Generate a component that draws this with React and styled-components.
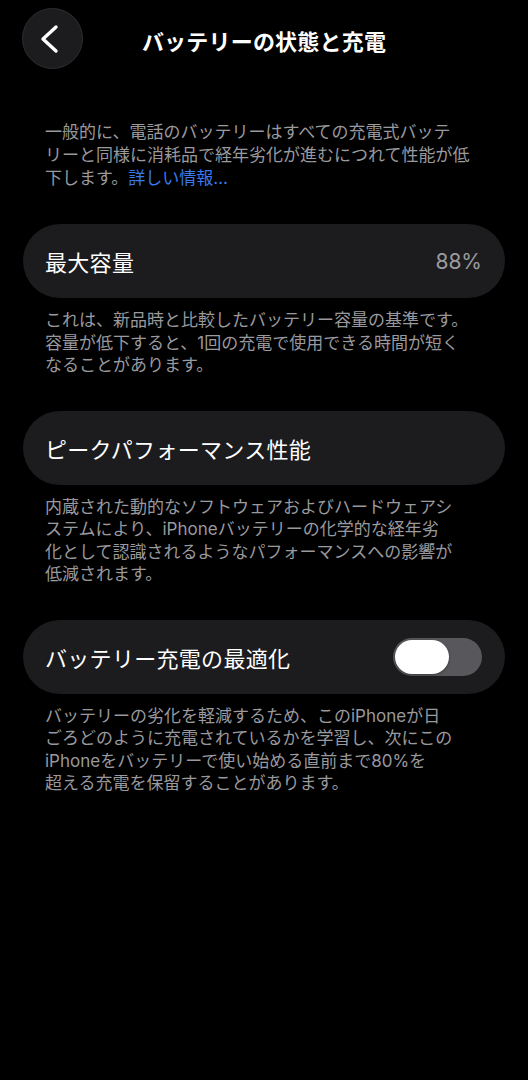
import styled, { createGlobalStyle } from 'styled-components'

const GlobalStyle = createGlobalStyle`
  html, body {
    margin: 0;
    padding: 0;
    background: #000;
  }
  body {
    font-family: Inter, "Noto Sans CJK JP", sans-serif;
    color: #fff;
    -webkit-font-smoothing: antialiased;
  }
`

const BackIcon = () => (
  <svg width='24' height='30' viewBox='0 0 24 30' fill='none'>
    <polyline
      points='17,3 4,15 17,27'
      stroke='#fff'
      strokeWidth='3.4'
      strokeLinecap='round'
      strokeLinejoin='round'
    />
  </svg>
)

const sections = [
  {
    label: '最大容量',
    value: '88%',
    note: [
      'これは、新品時と比較したバッテリー容量の基準です。',
      '容量が低下すると、1回の充電で使用できる時間が短く',
      'なることがあります。',
    ],
  },
  {
    label: 'ピークパフォーマンス性能',
    note: [
      '内蔵された動的なソフトウェアおよびハードウェアシ',
      'ステムにより、iPhoneバッテリーの化学的な経年劣',
      '化として認識されるようなパフォーマンスへの影響が',
      '低減されます。',
    ],
  },
  {
    label: 'バッテリー充電の最適化',
    toggle: true,
    note: [
      'バッテリーの劣化を軽減するため、このiPhoneが日',
      'ごろどのように充電されているかを学習し、次にこの',
      'iPhoneをバッテリーで使い始める直前まで80%を',
      '超える充電を保留することがあります。',
    ],
  },
]

const App = () => {
  return (
    <Page>
      <GlobalStyle />
      <Header>
        <BackButton aria-label='戻る'>
          <BackIcon />
        </BackButton>
        <Title>バッテリーの状態と充電</Title>
      </Header>

      <Intro>
        一般的に、電話のバッテリーはすべての充電式バッテ
        <br />
        リーと同様に消耗品で経年劣化が進むにつれて性能が低
        <br />
        下します。<MoreLink>詳しい情報…</MoreLink>
      </Intro>

      {sections.map((s) => (
        <Section key={s.label}>
          <Card>
            <Label>{s.label}</Label>
            {s.value && <Value>{s.value}</Value>}
            {s.toggle && (
              <Switch>
                <Knob />
              </Switch>
            )}
          </Card>
          <Note>
            {s.note.map((line, i) => (
              <span key={i}>
                {line}
                {i < s.note.length - 1 && <br />}
              </span>
            ))}
          </Note>
        </Section>
      ))}
    </Page>
  )
}

export default App

const Page = styled.div`
  width: 528px;
  min-height: 1080px;
  box-sizing: border-box;
  padding: 8px 23px 0 23px;
  background: #000;
`

const Header = styled.header`
  display: grid;
  grid-template-columns: 62px 1fr 62px;
  align-items: center;
  height: 61px;
`

const BackButton = styled.button`
  width: 61px;
  height: 61px;
  border-radius: 50%;
  background: #1c1c1e;
  border: 1px solid #2e2e30;
  display: flex;
  align-items: center;
  justify-content: center;
  padding: 0 4px 0 0;
  margin-left: -1px;
`

const Title = styled.h1`
  margin: 3px 0 0 0;
  text-align: center;
  font-size: 22px;
  font-weight: 600;
  letter-spacing: 0.2px;
  color: #fff;
`

const Intro = styled.p`
  margin: 52px 0 0 0;
  padding: 0 22px;
  font-size: 17px;
  line-height: 23px;
  color: #99999e;
  white-space: nowrap;
`

const MoreLink = styled.a`
  color: #3a78ee;
`

const Section = styled.section`
  margin-top: 34px;
`

const Card = styled.div`
  height: 74px;
  border-radius: 37px;
  background: #1c1c1e;
  display: flex;
  align-items: center;
  justify-content: space-between;
  padding: 0 23px 0 22px;
`

const Label = styled.span`
  font-size: 22px;
  color: #fff;
  letter-spacing: 0.3px;
`

const Value = styled.span`
  font-size: 21px;
  color: #9a9a9f;
`

const Switch = styled.div`
  width: 89px;
  height: 38px;
  border-radius: 19px;
  background: #58585c;
  display: flex;
  align-items: center;
  padding: 0 2px;
  box-sizing: border-box;
`

const Knob = styled.div`
  width: 54px;
  height: 34px;
  border-radius: 17px;
  background: #fff;
  box-shadow: 0 1px 3px rgba(0, 0, 0, 0.35);
`

const Note = styled.p`
  margin: 11px 0 0 0;
  padding: 0 22px;
  font-size: 17px;
  line-height: 22.5px;
  color: #99999e;
  white-space: nowrap;
`
